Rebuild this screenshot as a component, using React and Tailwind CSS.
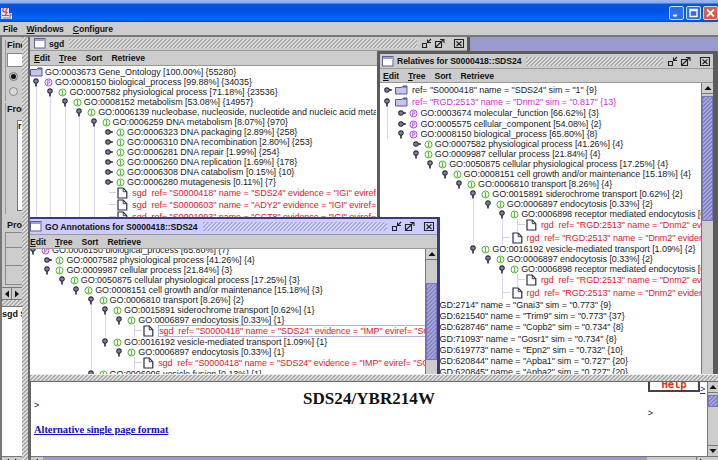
import React from "react";

const STEP = 14.4;

const hatchGray =
  "bg-[linear-gradient(135deg,#ababab_0_25%,#dcdcdc_25%_50%,#ababab_50%_75%,#dcdcdc_75%)] bg-[length:4px_4px]";
const hatchBlue =
  "bg-[linear-gradient(135deg,#a8a8dc_0_25%,#d4d4ff_25%_50%,#a8a8dc_50%_75%,#d4d4ff_75%)] bg-[length:4px_4px]";
const hatchThumb =
  "bg-[linear-gradient(135deg,#8484c6_0_25%,#a6a6de_25%_50%,#8484c6_50%_75%,#a6a6de_75%)] bg-[length:4px_4px]";

function Handle({ open }) {
  return (
    <svg width="10" height="10" viewBox="0 0 10 10" className="shrink-0">
      {open ? (
        <path d="M5 6v3.4" stroke="#25253f" strokeWidth="1.6" />
      ) : (
        <path d="M6 5h3.8" stroke="#25253f" strokeWidth="1.6" />
      )}
      <circle cx="5" cy={open ? 4 : 5} r="2.2" fill="#b4b4cc" stroke="#25253f" strokeWidth="1.2" />
      <circle cx="5" cy={open ? 4 : 5} r="0.7" fill="#25253f" />
    </svg>
  );
}

function Badge({ kind }) {
  const c = kind === "P" ? "#b048d8" : "#4fb52c";
  return (
    <svg width="9" height="9" viewBox="0 0 9 9" className="shrink-0">
      <circle cx="4.5" cy="4.5" r="3.5" fill="#fff" stroke={c} strokeWidth="1" />
      {kind === "P" ? (
        <path d="M3.7 7V2.6h1.1a1.2 1.2 0 010 2.4H3.7" fill="none" stroke={c} strokeWidth="0.9" />
      ) : (
        <path d="M4.5 2.2v4.6M3.7 2.6h.8M3.6 6.7h1.8" stroke={c} strokeWidth="0.9" />
      )}
    </svg>
  );
}

function Folder() {
  return (
    <svg width="13" height="10" viewBox="0 0 13 10" className="shrink-0">
      <path d="M.5 2.5H7l1-1.5h4v8H.5z" fill="#c4c4ee" stroke="#5a5a8c" />
      <path d="M8 1.7h4" stroke="#5a5a8c" strokeWidth="1.6" />
    </svg>
  );
}

function Doc() {
  return (
    <svg width="11" height="12" viewBox="0 0 11 12" className="shrink-0">
      <path d="M1 1h5.2L9.8 4.7V11H1z" fill="#fff" stroke="#2b2b45" strokeWidth="1.2" />
      <path d="M6.2 1v3.7h3.6" fill="none" stroke="#2b2b45" strokeWidth="0.9" />
    </svg>
  );
}

/* One tree line. `level` sets the indent and `guides` the levels that show a vertical connector. */
function Row({ h = 10, level = 0, kind, open, guides = [], color = "text-[#1c1c1c]", boxed, children }) {
  const cells = Array.from({ length: level }, (_, i) => i);
  const leaf = kind === "doc";
  return (
    <div className={`flex shrink-0 items-center whitespace-pre ${color}`} style={{ height: h }}>
      {cells.map((i) => (
        <span key={i} className="flex h-full shrink-0" style={{ width: STEP }}>
          <span className={`ml-[5px] h-full w-px ${guides.includes(i) ? "bg-[#d6d6ee]" : ""}`} />
          {leaf && i === level - 1 && <span className="mt-[5px] h-px w-[7px] bg-[#d0d0e6]" />}
        </span>
      ))}
      {leaf ? (
        <span className="mr-[4px] flex shrink-0"><Doc /></span>
      ) : (
        <>
          <Handle open={open} />
          {kind === "folder" ? (
            <span className="ml-[3px] mr-[4px] flex shrink-0"><Folder /></span>
          ) : (
            <span className="ml-[3px] mr-[2px] flex shrink-0"><Badge kind={kind} /></span>
          )}
        </>
      )}
      <span className={boxed ? "flex h-full w-[300px] items-center border border-[#b3b3e0]" : ""}>{children}</span>
    </div>
  );
}

function MenuBar({ items, className = "" }) {
  return (
    <div className={`flex shrink-0 items-center bg-[#cccccc] text-[8.6px] font-bold text-[#111] ${className}`}>
      {items.map((m) => (
        <span key={m}>
          {["File", "Sort", "Retrieve"].includes(m) ? m : <><u className="underline-offset-1">{m[0]}</u>{m.slice(1)}</>}
        </span>
      ))}
    </div>
  );
}

function Titlebar({ title, hatch, className = "" }) {
  return (
    <div className={`flex shrink-0 items-center text-[8.6px] font-bold text-[#111] ${className}`}>
      <svg width="12" height="11" viewBox="0 0 12 11" className="shrink-0">
        <rect x="0.5" y="0.5" width="10.5" height="9.5" fill="#fff" stroke="#5f5f95" />
        <path d="M1 2h9.500" stroke="#9c9cd6" strokeWidth="2" />
      </svg>
      <span className="ml-[3px] whitespace-pre">{title}</span>
      <span className={`ml-[5px] mr-[4px] h-[9px] flex-1 ${hatch}`} />
      <svg width="43" height="11" viewBox="0 0 43 11" fill="none" stroke="#222" strokeWidth="1.1" className="shrink-0">
        <path d="M1.500 5.500h4v4h-4zM10 1L6.500 4.500M6.500 1.500v3h3.500" />
        <path d="M14.500 3.500h6v6h-6zM15 9L22.500 1.500M19 1.500h4v3.500" />
        <path d="M33.500 1.500h9v8h-9zM35.500 3.500l5 4.500M40.500 3.500l-5 4.500" />
      </svg>
    </div>
  );
}

function Arrow({ dir }) {
  const d = { up: "M5 3L8.500 7H1.500z", down: "M5 7L8.500 3H1.500z", left: "M3 5l4-3.500v7z", right: "M7 5L3 1.500v7z" }[dir];
  return (
    <svg width="10" height="10" viewBox="0 0 10 10" className="shrink-0"><path d={d} fill="#111" /></svg>
  );
}

function VScroll({ thumbTop, thumbHeight }) {
  return (
    <div className="flex w-[12px] shrink-0 flex-col border-l border-[#777] bg-[#cccccc]">
      <div className="flex h-[11px] shrink-0 items-center justify-center border-b border-[#777] bg-[#d0d0d0]"><Arrow dir="up" /></div>
      <div className={`w-full shrink-0 border border-[#7777b8] ${hatchThumb}`} style={{ marginTop: thumbTop, height: thumbHeight }} />
    </div>
  );
}

const sgd = [
  [1, "I", "GO:0007582 physiological process [71.18%] {23536}"],
  [2, "I", "GO:0008152 metabolism [53.08%] {14957}"],
  [3, "I", "GO:0006139 nucleobase, nucleoside, nucleotide and nucleic acid metabolism"],
  [4, "I", "GO:0006259 DNA metabolism [8.07%] {970}"],
];
const dna = [
  "GO:0006323 DNA packaging [2.89%] {258}",
  "GO:0006310 DNA recombination [2.80%] {253}",
  "GO:0006281 DNA repair [1.99%] {254}",
  "GO:0006260 DNA replication [1.69%] {178}",
  "GO:0006308 DNA catabolism [0.15%] {10}",
  "GO:0006280 mutagenesis [0.11%] {7}",
];
const sgdRefs = [
  'sgd  ref= "S0000418" name = "SDS24" evidence = "IGI" eviref=',
  'sgd  ref= "S0000603" name = "ADY2" evidence = "IGI" eviref=',
  'sgd  ref= "S0001093" name = "CCT8" evidence = "IGI" eviref=',
];
const RED = "text-[#e0202c]";
const rgd = 'rgd  ref= "RGD:2513" name = "Dnm2" evidence';
const imp = 'sgd  ref= "S0000418" name = "SDS24" evidence = "IMP" eviref= "SGD"';

const relatives = [
  { h: 12, level: 1, kind: "P", open: false, guides: [0], t: "GO:0003674 molecular_function [66.62%] {3}" },
  { level: 1, kind: "P", open: false, guides: [0], t: "GO:0005575 cellular_component [54.08%] {2}" },
  { level: 1, kind: "P", open: true, guides: [0], t: "GO:0008150 biological_process [65.80%] {8}" },
  { level: 2, kind: "I", open: false, t: "GO:0007582 physiological process [41.26%] {4}" },
  { level: 2, kind: "I", open: true, t: "GO:0009987 cellular process [21.84%] {4}" },
  { level: 3, kind: "I", open: true, t: "GO:0050875 cellular physiological process [17.25%] {4}" },
  { level: 4, kind: "I", open: true, t: "GO:0008151 cell growth and/or maintenance [15.18%] {4}" },
  { level: 5, kind: "I", open: true, t: "GO:0006810 transport [8.26%] {4}" },
  { level: 6, kind: "I", open: true, t: "GO:0015891 siderochrome transport [0.62%] {2}" },
  { level: 7, kind: "I", open: true, guides: [6], t: "GO:0006897 endocytosis [0.33%] {2}" },
  { level: 8, kind: "I", open: true, guides: [6], t: "GO:0006898 receptor mediated endocytosis [0.09%]" },
  { h: 12.5, level: 10, kind: "doc", guides: [6, 8, 9], t: rgd },
  { h: 12.5, level: 9, kind: "doc", guides: [6, 8], t: rgd },
  { level: 6, kind: "I", open: true, t: "GO:0016192 vesicle-mediated transport [1.09%] {2}" },
  { level: 7, kind: "I", open: true, t: "GO:0006897 endocytosis [0.33%] {2}" },
  { level: 8, kind: "I", open: true, t: "GO:0006898 receptor mediated endocytosis [0.09%]" },
  { h: 12.5, level: 10, kind: "doc", guides: [8, 9], t: rgd },
  { h: 12.5, level: 9, kind: "doc", guides: [8], t: rgd },
];
const others = [
  ["2714", "Gnai3", "0.773", 9],
  ["621540", "Trim9", "0.773", 37],
  ["628746", "Copb2", "0.734", 8],
  ["71093", "Gosr1", "0.734", 8],
  ["619773", "Epn2", "0.732", 10],
  ["620844", "Apba1", "0.727", 20],
  ["620845", "Apba2", "0.727", 20],
];
const annotations = [
  { level: 0, kind: "P", open: true, t: "GO:0008150 biological_process [65.80%] {7}" },
  { level: 1, kind: "I", open: false, t: "GO:0007582 physiological process [41.26%] {4}" },
  { level: 1, kind: "I", open: true, t: "GO:0009987 cellular process [21.84%] {3}" },
  { level: 2, kind: "I", open: true, t: "GO:0050875 cellular physiological process [17.25%] {3}" },
  { level: 3, kind: "I", open: true, t: "GO:0008151 cell growth and/or maintenance [15.18%] {3}" },
  { level: 4, kind: "I", open: true, t: "GO:0006810 transport [8.26%] {2}" },
  { level: 5, kind: "I", open: true, guides: [4], t: "GO:0015891 siderochrome transport [0.62%] {1}" },
  { level: 6, kind: "I", open: true, guides: [4, 5], t: "GO:0006897 endocytosis [0.33%] {1}" },
  { h: 12, level: 8, kind: "doc", guides: [4, 5, 7], t: imp, boxed: true },
  { level: 5, kind: "I", open: true, guides: [4], t: "GO:0016192 vesicle-mediated transport [1.09%] {1}" },
  { level: 6, kind: "I", open: true, guides: [4], t: "GO:0006897 endocytosis [0.33%] {1}" },
  { h: 12, level: 8, kind: "doc", guides: [4, 7], t: imp },
  { level: 4, kind: "I", open: true, t: "GO:0006906 vesicle fusion [0.13%] {1}" },
];

function Rows({ data }) {
  return data.map(({ t, ...r }, i) => (
    <Row key={i} {...r} color={r.kind === "doc" ? RED : undefined}>{t}</Row>
  ));
}

function SgdWindow() {
  return (
    <section className="absolute left-0 top-0 flex h-[300px] w-[440px] flex-col border-r-[3px] border-[#555] bg-white">
      <Titlebar title="sgd" hatch={hatchGray} className="h-[13px] bg-[#cccccc] pl-[4px] pr-[3px]" />
      <MenuBar items={["Edit", "Tree", "Sort", "Retrieve"]} className="h-[16px] gap-[9px] border-b border-t border-[#999] pl-[4px]" />
      <div className="flex w-[346px] flex-col overflow-hidden pt-[1px]">
        <div className="flex h-[10px] items-center whitespace-pre text-[#1c1c1c]">
          <span className="mr-[2px] flex"><Folder /></span>GO:0003673 Gene_Ontology [100.00%] {"{55280}"}
        </div>
        <div className="flex flex-col pl-px">
          <Row kind="P" open>{"GO:0008150 biological_process [99.88%] {34035}"}</Row>
          {sgd.map(([l, k, t]) => (
            <Row key={t} level={l} kind={k} open guides={[0, 1, 2, 3].slice(0, l)}>{t}</Row>
          ))}
          {dna.map((t) => (
            <Row key={t} level={5} kind="I" guides={[0, 1, 2, 3, 4]}>{t}</Row>
          ))}
          {sgdRefs.map((t) => (
            <Row key={t} h={12} level={6} kind="doc" color={RED} guides={[0, 1, 2, 3, 4]}>{t}</Row>
          ))}
        </div>
      </div>
    </section>
  );
}

function RelativesWindow() {
  return (
    <section className="absolute left-[347px] top-[14px] flex h-[340px] w-[341px] flex-col border-[3px] border-r-[5px] border-[#5c5c5c] bg-white">
      <Titlebar title="Relatives for S0000418::SDS24" hatch={hatchGray} className="h-[14px] bg-[#cccccc] pl-[2px] pr-[3px]" />
      <MenuBar items={["Edit", "Tree", "Sort", "Retrieve"]} className="h-[15px] gap-[9px] border-b border-t border-[#999] pl-[3px]" />
      <div className="flex min-h-0 flex-1">
        <div className="flex min-w-0 flex-1 flex-col overflow-hidden pl-[2px] pt-[1px]">
          <Row h={12} kind="folder">{'ref= "S0000418" name = "SDS24" sim = "1" {9}'}</Row>
          <Row h={11} kind="folder" open color="text-[#d42fd0]">{'ref= "RGD:2513" name = "Dnm2" sim = "0.817" {13}'}</Row>
          <Rows data={relatives} />
          {others.map(([id, name, sim, n]) => (
            <Row key={id} h={11.3} kind="folder">{`ref= "RGD:${id}" name = "${name}" sim = "${sim}" {${n}}`}</Row>
          ))}
        </div>
        <VScroll thumbTop={2} thumbHeight={125} />
      </div>
    </section>
  );
}

function AnnotationsWindow() {
  return (
    <section className="absolute left-0 top-[180px] flex h-[200px] w-[410px] flex-col border-r-[3px] border-t-[2px] border-[#3b3b78] bg-white">
      <Titlebar title="GO Annotations for S0000418::SDS24" hatch={hatchBlue} className="h-[15px] bg-[#ccccff] pr-[3px] tracking-[-0.04px]" />
      <MenuBar items={["Edit", "Tree", "Sort", "Retrieve"]} className="h-[15px] gap-[9px] border-b border-t border-[#999]" />
      <div className="flex min-h-0 flex-1">
        <div className="flex min-w-0 flex-1 flex-col overflow-hidden">
          <div className="-ml-[2px] -mt-[4px] flex flex-col">
            <Rows data={annotations} />
          </div>
        </div>
        <VScroll thumbTop={23} thumbHeight={77} />
      </div>
    </section>
  );
}

function XpButton({ red, children }) {
  return (
    <span className={`flex h-[14px] w-[15px] items-center justify-center rounded-[2px] border border-[#c8dcff] ${red ? "bg-[#e0583a]" : "bg-[#2f6ee8]"}`}>
      <svg width="11" height="10" viewBox="0 0 11 10" fill="none" stroke="#fff">{children}</svg>
    </span>
  );
}

function LeftPane() {
  return (
    <aside className="flex w-[22px] shrink-0 flex-col overflow-hidden border-l-[2px] border-[#777] bg-[#cccccc] text-[9px] font-bold text-[#111]">
      <div className="flex h-[263px] shrink-0 flex-col pl-[3px] pt-[3px]">
        <div className="flex h-[61px] shrink-0 flex-col border-l border-[#999] pl-[1px]">
          <span className="h-[10px] leading-[10px]">Find</span>
          <span className="mt-[3px] h-[14px] w-[30px] shrink-0 border border-[#888] bg-white" />
          <span className="ml-[2px] mt-[5px] flex h-[9px] w-[9px] shrink-0 items-center justify-center rounded-full border border-[#777]">
            <i className="h-[5px] w-[5px] rounded-full bg-[#111]" />
          </span>
          <span className="ml-[2px] mt-[6px] h-[9px] w-[9px] shrink-0 rounded-full border border-[#888] bg-[#d8d8d8]" />
        </div>
        <div className="mt-[2px] flex h-[111px] shrink-0 flex-col border-l border-[#999] pl-[1px]">
          <span className="h-[12px] leading-[12px]">From</span>
          <span className="ml-[10px] mt-[5px] h-[91px] w-[20px] border border-[#777] bg-white leading-[11px]">r</span>
        </div>
        <div className="mt-[5px] flex shrink-0 flex-col">
          <span className="h-[13px] pl-[2px] leading-[13px]">Prob</span>
          <span className="h-[16px] border border-r-0 border-[#888]" />
          <span className="h-[18px] border border-r-0 border-t-0 border-[#888]" />
          <span className="h-[19px] border border-r-0 border-t-0 border-[#888]" />
        </div>
      </div>
      <div className="-mt-[13px] flex h-[13px] shrink-0 border-y border-[#777] bg-[#cccccc]">
        <span className="flex w-[10px] items-center border-r border-[#777]"><Arrow dir="left" /></span>
        <span className="flex w-[10px] items-center"><Arrow dir="right" /></span>
      </div>
      <div className={`h-[6px] shrink-0 ${hatchGray}`} />
      <div className="min-h-0 flex-1 whitespace-nowrap border-t border-[#777] bg-white pt-[2px]">sgd S0</div>
      <div className="flex h-[4px] shrink-0 overflow-hidden border-t border-[#777]">
        <Arrow dir="left" /><Arrow dir="right" />
      </div>
    </aside>
  );
}

function PageView() {
  return (
    <div className="flex min-h-0 flex-1 flex-col border-l border-t border-[#666] bg-white">
      <div className="flex min-h-0 flex-1">
        <div className="relative flex min-w-0 flex-1 flex-col overflow-hidden font-['Liberation_Serif',serif] text-[#111]">
          <h1 className="pl-[272px] pt-[7px] text-[17px] font-bold leading-[20px] tracking-[0.05px]">SDS24/YBR214W</h1>
          <div className="flex h-[15px] justify-between pl-[3px] pr-[54px] font-['Liberation_Sans',sans-serif] text-[9px] leading-[10px]">
            <span className="-mt-[9px]">&gt;</span>
            <span className="-mt-[1px]">&gt;</span>
          </div>
          <a className="pl-[3px] text-[10.5px] font-bold leading-[12px] text-[#1010c8] underline">Alternative single page format</a>
          <div className="absolute right-0 top-0 flex">
            <span className="flex h-[10px] w-[52px] items-end justify-center overflow-hidden border-b-2 border-l-2 border-r-2 border-[#444] bg-white pb-px font-['DejaVu_Sans_Mono',monospace] text-[10.5px] font-bold leading-[10px] text-[#e03010]">Help</span>
            <span className="w-[7px] pt-[2px] font-['Liberation_Sans',sans-serif] text-[9px] leading-[10px] text-[#2020c0] underline">&gt;</span>
          </div>
        </div>
        <div className="flex w-[11px] shrink-0 flex-col border-l border-[#777] bg-[#cccccc]">
          <div className="flex h-[11px] shrink-0 items-center border-b border-[#777]"><Arrow dir="up" /></div>
          <div className={`mt-[2px] h-[12px] shrink-0 border border-[#7777b8] ${hatchThumb}`} />
          <div className="flex-1" />
          <div className="flex h-[11px] shrink-0 items-center border-t border-[#777]"><Arrow dir="down" /></div>
        </div>
      </div>
      <div className="flex h-[4px] shrink-0 overflow-hidden border-t border-[#777] bg-[#cccccc]">
        <span className="flex w-[12px] shrink-0"><Arrow dir="left" /></span>
        <span className="w-[604px] shrink-0 bg-[#9999d8]" />
        <span className="flex-1" />
        <span className="flex w-[22px] border-l border-[#777]"><Arrow dir="right" /></span>
      </div>
    </div>
  );
}

export default function App() {
  return (
    <div className="flex h-[460px] w-[718px] flex-col overflow-hidden bg-[#cccccc] font-['Liberation_Sans',Arial,sans-serif] text-[9px] leading-[10px] tracking-[-0.06px]">
      <header className="flex h-[22px] shrink-0 items-center justify-between bg-[linear-gradient(#9ab8f0_0px,#86acf2_3px,#0c54dc_4px,#0052e0_10px,#0663fa_19px,#0048d0_22px)] pt-[4px]">
        <svg width="14" height="13" viewBox="0 0 14 13">
          <path d="M1 1h8v5h3v6H1z" fill="#e8e8fa" />
          <path d="M4 1q-3 3 1 4q3 1 0 3M7.500 1q-3 3 0 5" stroke="#e04050" strokeWidth="1.300" fill="none" />
          <path d="M2 8.500h7M3 11h8M9 7h2v2H9" stroke="#5577bb" fill="none" />
        </svg>
        <div className="flex gap-[2px]">
          <XpButton><path d="M2 7.500h4" strokeWidth="2" /></XpButton>
          <XpButton><path d="M2 1.500h7v7H2zM2 2.500h7" strokeWidth="1.400" /></XpButton>
          <XpButton red><path d="M2 1.500l7 7M9 1.500l-7 7" strokeWidth="1.800" /></XpButton>
        </div>
      </header>
      <MenuBar items={["File", "Windows", "Configure"]} className="h-[15px] gap-[9px] border-b-2 border-[#777] pl-[3px]" />
      <div className="flex min-h-0 flex-1">
        <LeftPane />
        <div className={`w-[8px] shrink-0 border-r-2 border-[#666] ${hatchGray}`} />
        <main className="flex min-w-0 flex-1 flex-col">
          <div className="relative h-[337px] shrink-0 overflow-hidden bg-[#9999cc]">
            <SgdWindow />
            <RelativesWindow />
            <AnnotationsWindow />
          </div>
          <div className={`h-[7px] shrink-0 border-t border-[#eee] ${hatchGray}`} />
          <PageView />
        </main>
      </div>
    </div>
  );
}
